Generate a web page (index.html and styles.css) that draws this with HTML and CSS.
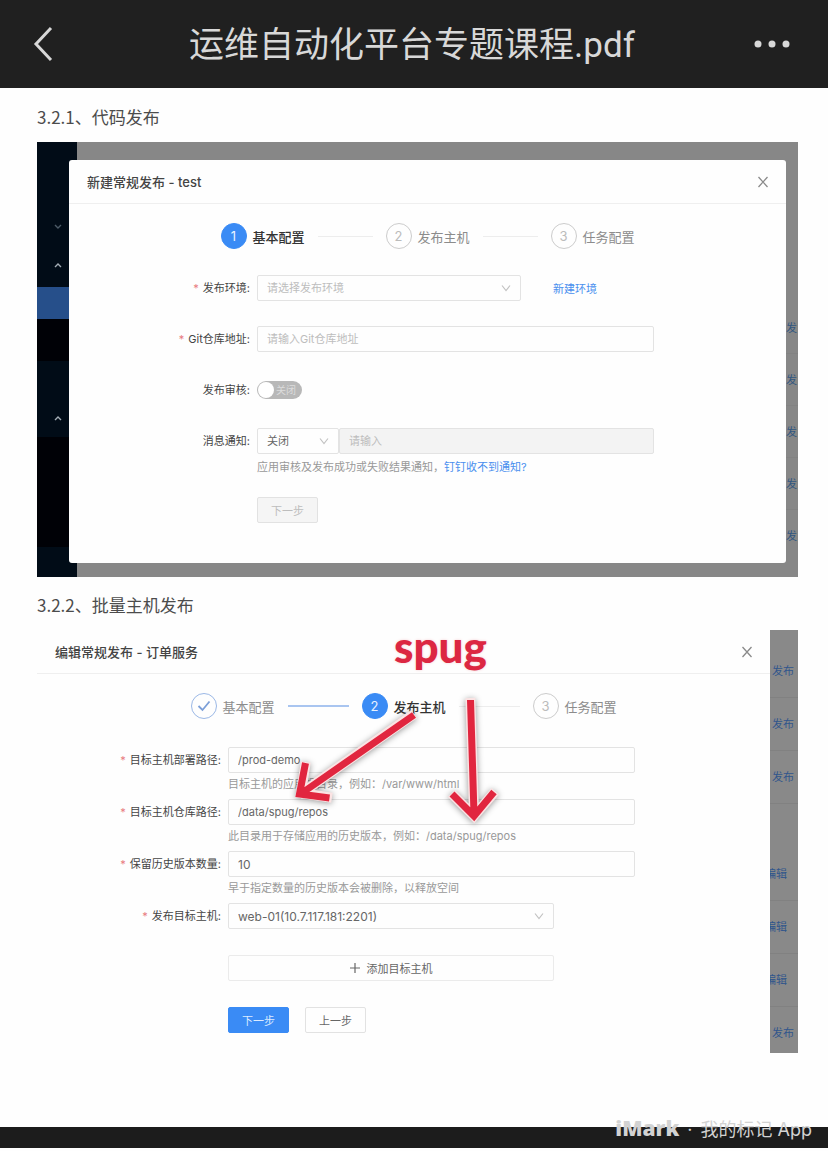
FILE: index.html
```html
<!DOCTYPE html>
<html lang="zh-CN">
<head>
<meta charset="utf-8">
<meta name="viewport" content="width=device-width, initial-scale=1">
<title>运维自动化平台专题课程.pdf</title>
<link rel="stylesheet" href="styles.css">
</head>
<body>
<header class="topbar">
  <button class="icon-btn" type="button" aria-label="返回">
    <svg width="24" height="38" viewBox="0 0 24 38" fill="none" stroke="#d8d8d8" stroke-width="3"><path d="M19 3 4 19l15 16"/></svg>
  </button>
  <h1 class="topbar-title">运维自动化平台专题课程.pdf</h1>
  <button class="icon-btn" type="button" aria-label="更多">
    <svg width="38" height="10" viewBox="0 0 38 10" fill="#d8d8d8"><circle cx="4" cy="5" r="3.500"/><circle cx="18" cy="5" r="3.500"/><circle cx="32" cy="5" r="3.500"/></svg>
  </button>
</header>

<main class="doc">
  <h2 class="section-title">3.2.1、代码发布</h2>
  <section class="shot shot-stack">
    <div class="backdrop">
      <div class="side">
        <div class="side-gap"></div>
        <div class="side-item"><svg width="8" height="6" viewBox="0 0 8 6" fill="none" stroke="#4c5a66" stroke-width="1.4"><path d="M1 1l3 3 3-3"/></svg></div>
        <div class="side-item"><svg width="8" height="6" viewBox="0 0 8 6" fill="none" stroke="#a4adb5" stroke-width="1.4"><path d="M1 5l3-3 3 3"/></svg></div>
        <div class="side-active"></div>
        <div class="side-sub"></div>
        <div class="side-item"></div>
        <div class="side-item"><svg width="8" height="6" viewBox="0 0 8 6" fill="none" stroke="#a4adb5" stroke-width="1.4"><path d="M1 5l3-3 3 3"/></svg></div>
        <div class="side-sub side-sub-fill"></div>
        <div class="side-end"></div>
      </div>
      <div class="back-links">
        <a href="#">发</a><a href="#">发</a><a href="#">发</a><a href="#">发</a><a href="#">发</a>
      </div>
    </div>
    <div class="dialog dialog-float">
      <div class="dialog-head">
        <h3 class="dialog-title">新建常规发布 - test</h3>
        <button class="close" type="button" aria-label="关闭"><svg width="12" height="12" viewBox="0 0 12 12" stroke="#8a8a8a" stroke-width="1.3"><path d="M1.500 1l9 10M10.500 1l-9 10"/></svg></button>
      </div>
      <ol class="steps">
        <li class="step step-current"><span class="step-dot">1</span><span>基本配置</span><i class="step-line"></i></li>
        <li class="step"><span class="step-dot">2</span><span>发布主机</span><i class="step-line"></i></li>
        <li class="step"><span class="step-dot">3</span><span>任务配置</span></li>
      </ol>
      <form class="form form-new">
        <div class="row">
          <label class="label required" for="env">发布环境:</label>
          <div class="line">
            <div class="select select-env">
              <select id="env" class="field placeholder"><option>请选择发布环境</option></select>
              <svg class="caret" width="10" height="8" viewBox="0 0 10 8"><path d="M1 1.500l4 5 4-5"/></svg>
            </div>
            <a class="link" href="#">新建环境</a>
          </div>
        </div>
        <div class="row">
          <label class="label required" for="git">Git仓库地址:</label>
          <input id="git" class="field" type="text" placeholder="请输入Git仓库地址">
        </div>
        <div class="row">
          <label class="label" for="audit">发布审核:</label>
          <div class="line">
            <div class="switch"><input id="audit" type="checkbox" role="switch"><span class="switch-text">关闭</span></div>
          </div>
        </div>
        <div class="row row-help">
          <label class="label" for="notify">消息通知:</label>
          <div>
            <div class="group">
              <div class="select select-notify">
                <select id="notify" class="field"><option>关闭</option></select>
                <svg class="caret" width="10" height="8" viewBox="0 0 10 8"><path d="M1 1.500l4 5 4-5"/></svg>
              </div>
              <input class="field" type="text" placeholder="请输入" aria-label="通知地址" disabled>
            </div>
            <p class="help">应用审核及发布成功或失败结果通知，<a class="link" href="#">钉钉收不到通知?</a></p>
          </div>
        </div>
        <div class="row">
          <span></span>
          <div class="actions"><button class="btn" type="button" disabled>下一步</button></div>
        </div>
      </form>
    </div>
  </section>

  <h2 class="section-title">3.2.2、批量主机发布</h2>
  <section class="shot shot-split">
    <div class="dialog">
      <div class="dialog-head">
        <h3 class="dialog-title">编辑常规发布 - 订单服务</h3>
        <button class="close" type="button" aria-label="关闭"><svg width="12" height="12" viewBox="0 0 12 12" stroke="#8a8a8a" stroke-width="1.3"><path d="M1.500 1l9 10M10.500 1l-9 10"/></svg></button>
      </div>
      <ol class="steps steps-wide">
        <li class="step step-done"><span class="step-dot"><svg width="14" height="12" viewBox="0 0 14 12" fill="none" stroke="#7c9fd8" stroke-width="1.800"><path d="M1.500 6l4 4 7-8.500"/></svg></span><span>基本配置</span><i class="step-line"></i></li>
        <li class="step step-current"><span class="step-dot">2</span><span>发布主机</span><i class="step-line"></i></li>
        <li class="step"><span class="step-dot">3</span><span>任务配置</span></li>
      </ol>
      <form class="form form-edit">
        <div class="row">
          <label class="label required" for="deploy">目标主机部署路径:</label>
          <div><input id="deploy" class="field" type="text" value="/prod-demo"><p class="help">目标主机的应用根目录，例如：/var/www/html</p></div>
        </div>
        <div class="row">
          <label class="label required" for="repo">目标主机仓库路径:</label>
          <div><input id="repo" class="field" type="text" value="/data/spug/repos"><p class="help">此目录用于存储应用的历史版本，例如：/data/spug/repos</p></div>
        </div>
        <div class="row">
          <label class="label required" for="keep">保留历史版本数量:</label>
          <div><input id="keep" class="field field-number" type="text" value="10"><p class="help">早于指定数量的历史版本会被删除，以释放空间</p></div>
        </div>
        <div class="row row-host">
          <label class="label required" for="host">发布目标主机:</label>
          <div class="select select-host">
            <select id="host" class="field field-number"><option>web-01(10.7.117.181:2201)</option></select>
            <svg class="caret" width="10" height="8" viewBox="0 0 10 8"><path d="M1 1.500l4 5 4-5"/></svg>
          </div>
        </div>
        <div class="row row-host">
          <span></span>
          <button class="btn btn-add" type="button"><svg width="10" height="10" viewBox="0 0 10 10" stroke="#666" stroke-width="1.200"><path d="M5 0v10M0 5h10"/></svg>添加目标主机</button>
        </div>
        <div class="row">
          <span></span>
          <div class="actions"><button class="btn btn-primary" type="button">下一步</button><button class="btn" type="button">上一步</button></div>
        </div>
      </form>
    </div>
    <div class="strip">
      <a href="#">发布</a><a href="#">发布</a><a href="#">发布</a>
      <a class="strip-break cut" href="#">编辑</a><a class="cut" href="#">编辑</a><a class="cut" href="#">编辑</a><a href="#">发布</a>
    </div>
    <div class="mark-text">spug</div>
    <svg class="mark-arrows" width="500" height="220" viewBox="0 0 500 220" fill="none">
      <g stroke="#fbe3e3" stroke-width="10" stroke-linecap="square"><path d="M373 87 266 162M268 137l-4 26 26 4"/><path d="M433.500 73 437 183M418 167l19 19 18-21"/></g>
      <g stroke="#e1263f" stroke-width="7"><path d="M377 85 265 163M268.500 133l-6 31 30 4"/><path d="M433.500 70 437 184M415 164l22 22 20-24"/></g>
    </svg>
  </section>
</main>

<footer class="bottombar">
  <div class="watermark"><strong>iMark</strong><span>·</span><span>我的标记 App</span></div>
</footer>
</body>
</html>
```

FILE: styles.css
```css
* { box-sizing: border-box; }

body {
  margin: 0;
  min-height: 100vh;
  padding-bottom: 3px;
  display: flex;
  flex-direction: column;
  background: #fefefe;
  color: #555;
  font-family: Inter, "Noto Sans CJK SC", sans-serif;
  font-size: 11px;
}

h1, h2, h3, p, ol { margin: 0; padding: 0; }
a { text-decoration: none; }
button, input, select { font: inherit; color: inherit; margin: 0; }

.topbar {
  height: 88px;
  padding: 0 36px 0 32px;
  display: flex;
  align-items: center;
  justify-content: space-between;
  background: #202020;
  color: #d8d8d8;
}
.topbar-title {
  padding-top: 4px;
  font-family: Roboto, "Noto Sans CJK SC", sans-serif;
  font-size: 35px;
  font-weight: 400;
  line-height: 48px;
}
.icon-btn {
  width: 38px;
  padding: 0;
  border: 0;
  background: none;
  display: flex;
}

.doc { flex: 1; padding: 17px 30px 0 37px; }
.section-title {
  margin-bottom: 13px;
  font-family: "Noto Sans CJK SC", sans-serif;
  font-size: 17px;
  font-weight: 400;
  line-height: 24px;
  color: #4c4c4c;
}
.shot { margin-bottom: 16px; }
.shot-stack { display: grid; }
.shot-stack > * { grid-area: 1 / 1; }

/* dimmed application behind the first dialog */
.backdrop { display: flex; justify-content: space-between; background: #878787; }
.side { width: 40px; display: flex; flex-direction: column; background: #010c17; }
.side-gap { height: 66px; }
.side-item { height: 38px; padding-left: 17px; display: flex; align-items: center; }
.side-active { height: 32px; margin-top: 3px; background: #264f8a; }
.side-sub { height: 42px; background: #000106; }
.side-sub-fill { flex: 1; height: auto; }
.side-end { height: 30px; }
.back-links {
  width: 12px;
  padding-top: 160px;
  display: flex;
  flex-direction: column;
}
.back-links a {
  height: 52px;
  line-height: 52px;
  white-space: nowrap;
  color: #31567f;
  border-bottom: 1px solid #828282;
}
.back-links a:last-child { border-bottom: 0; }

.dialog { background: #fefefe; min-width: 0; }
.dialog-float { margin: 18px 12px 14px 32px; border-radius: 3px; }
.dialog-head {
  height: 44px;
  padding: 0 17px 0 18px;
  display: flex;
  align-items: center;
  justify-content: space-between;
  border-bottom: 1px solid #efefef;
}
.dialog-title { font-size: 13px; font-weight: 500; line-height: 20px; color: #444; }
.close { padding: 0; border: 0; background: none; display: flex; }

.steps {
  width: 414px;
  max-width: 100%;
  margin: 19px auto 26px;
  display: flex;
  gap: 13px;
  list-style: none;
  font-size: 13px;
  color: #8c8c8c;
}
.steps-wide { width: 426px; margin-bottom: 28px; }
.step { flex: 1 1 auto; display: flex; align-items: center; gap: 6px; white-space: nowrap; }
.step:last-child { flex: none; }
.step-dot {
  width: 26px;
  height: 26px;
  display: flex;
  align-items: center;
  justify-content: center;
  border: 1px solid #ccc;
  border-radius: 50%;
  color: #bbb;
}
.step-line { flex: 1; height: 1px; margin-left: 7px; background: #ededed; }
.step-current { color: #333; font-weight: 500; }
.step-current .step-dot { border-color: #3a8bf5; background: #3a8bf5; color: #e8f2ff; font-weight: 400; }
.step-done .step-dot { border-color: #9bb8e6; }
.step-done .step-line { height: 2px; background: #a9c5f0; }

.form { display: flex; flex-direction: column; }
.form-new { padding: 0 132px 40px 0; }
.form-edit { padding: 0 135px 20px 0; }
.row { display: grid; grid-template-columns: 188px minmax(0, 1fr); align-items: start; }
.form-edit .row { grid-template-columns: 191px minmax(0, 1fr); margin-bottom: 6px; }
.form-new .row { margin-bottom: 25px; }
.form-new .row-help { margin-bottom: 21px; }
.form-edit .row-host { margin-bottom: 26px; }
.form .row:last-child { margin-bottom: 0; }
.label { padding-right: 7px; text-align: right; line-height: 26px; color: #444; white-space: nowrap; }
.required::before { content: "*"; margin-right: 4px; color: #e87a80; }
.line { height: 26px; display: flex; align-items: center; gap: 32px; }
.field {
  display: block;
  width: 100%;
  height: 26px;
  padding: 0 9px;
  border: 1px solid #e3e3e3;
  border-radius: 2px;
  background: #fefefe;
  color: #666;
  appearance: none;
}
.field::placeholder { color: #bdbdbd; opacity: 1; }
.placeholder { color: #bdbdbd; }
.field:disabled { background: #f3f3f3; }
.field-number { font-size: 12px; }
.select { display: grid; align-items: center; }
.select > * { grid-area: 1 / 1; }
.select-env { width: 264px; }
.select-notify { width: 82px; flex: none; }
.select-host, .btn-add { width: 326px; max-width: 100%; }
.caret { justify-self: end; margin-right: 10px; pointer-events: none; fill: none; stroke: #c2c2c2; stroke-width: 1.2; }
.group { display: flex; }
.help { margin-top: 4px; line-height: 18px; color: #999; white-space: nowrap; }
.form-edit .help { margin-top: 2px; }
.link { color: #4a8fee; }

.switch { display: grid; align-items: center; }
.switch > * { grid-area: 1 / 1; }
.switch input {
  width: 45px;
  height: 18px;
  padding: 1px;
  border-radius: 9px;
  background: #b8b8b8;
  appearance: none;
}
.switch input::before { content: ""; display: block; width: 16px; height: 16px; border-radius: 50%; background: #fff; }
.switch-text { justify-self: end; margin-right: 6px; font-size: 10px; line-height: 18px; color: #dcdcdc; pointer-events: none; }

.actions { display: flex; gap: 16px; }
.btn {
  min-width: 61px;
  height: 26px;
  padding: 0 12px;
  display: flex;
  align-items: center;
  justify-content: center;
  border: 1px solid #e2e2e2;
  border-radius: 2px;
  background: #fefefe;
  color: #666;
}
.btn:disabled { background: #f5f5f5; color: #bdbdbd; }
.btn-primary { border-color: #3a8bf5; background: #3a8bf5; color: #dcebff; }
.btn-add { gap: 7px; border-color: #ebebeb; }

/* second capture: dialog beside the visible edge of the page behind it */
.shot-split { position: relative; display: grid; grid-template-columns: minmax(0, 1fr) 28px; }
.strip {
  padding-top: 15px;
  display: flex;
  flex-direction: column;
  overflow: hidden;
  background: #898989;
}
.strip a {
  height: 53px;
  padding-left: 2px;
  line-height: 53px;
  white-space: nowrap;
  color: #31568c;
  border-bottom: 1px solid #818181;
}
.strip a:last-child { height: 44px; border-bottom: 0; }
.strip .strip-break { margin-top: 44px; }
.strip .cut { direction: rtl; padding: 0 11px 0 0; }

/* red pen annotations drawn over the dialog */
.mark-text {
  position: absolute;
  left: 357px;
  top: -8px;
  font-family: Lato, sans-serif;
  font-size: 44px;
  font-weight: 900;
  line-height: 48px;
  color: #dc2742;
  text-shadow: 0 0 3px #f6cfd3;
}
.mark-arrows { position: absolute; left: 0; top: 0; pointer-events: none; filter: drop-shadow(0 1px 3px #0006); }

.bottombar { position: relative; height: 21px; background: #1c1c1c; }
.watermark {
  position: absolute;
  right: 16px;
  top: -13px;
  display: flex;
  align-items: baseline;
  gap: 8px;
  font-size: 18px;
  line-height: 28px;
  color: #d2d2d2;
  white-space: nowrap;
}
.watermark strong { font-family: "Open Sans", sans-serif; font-size: 21px; font-weight: 800; }
```
